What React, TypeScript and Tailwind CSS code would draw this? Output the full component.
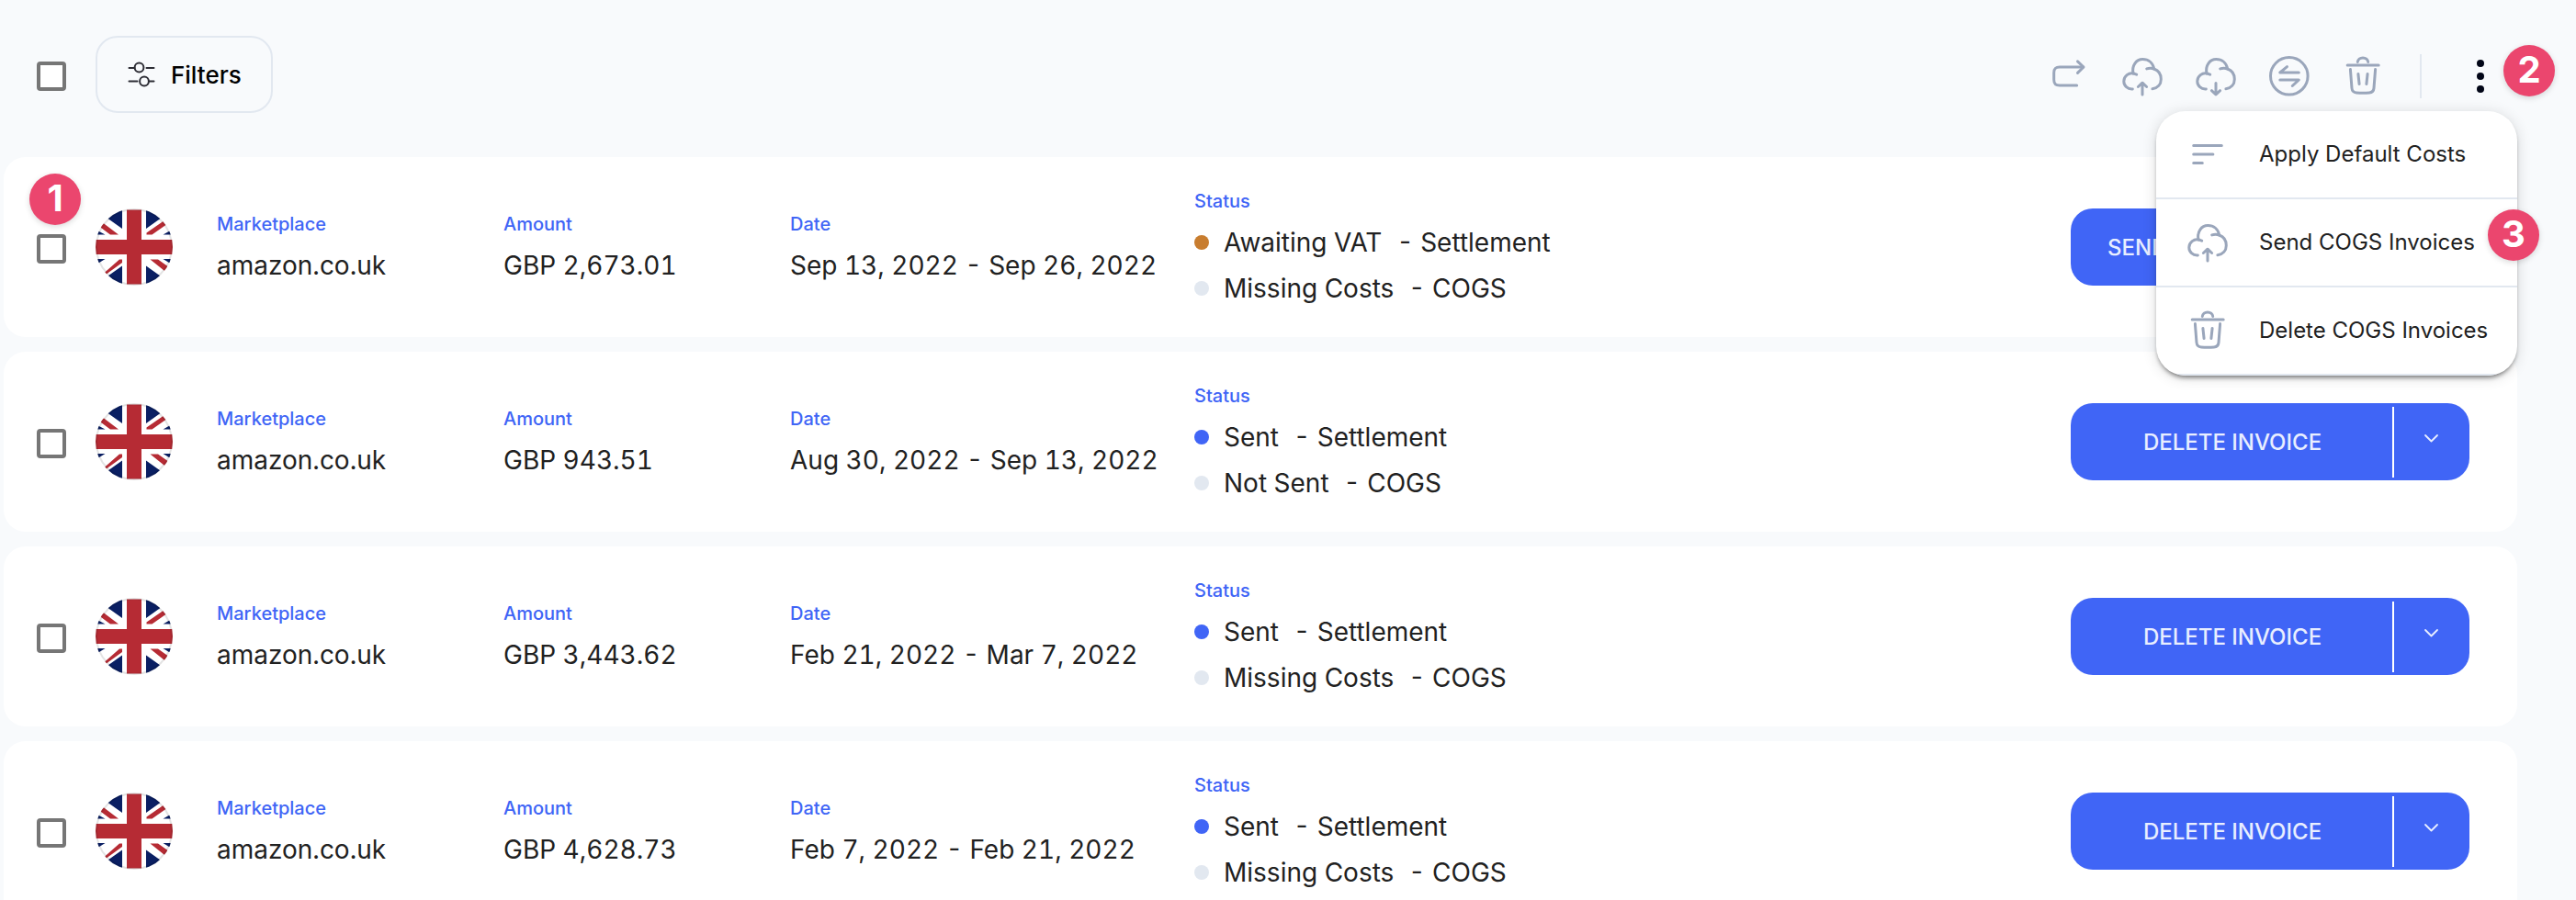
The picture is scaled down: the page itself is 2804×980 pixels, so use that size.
import { ReactNode } from "react";

type Status = {
  label: string;
  type: string;
  color: string;
};

type Invoice = {
  amount: string;
  date: string;
  statuses: Status[];
  action: string;
};

const invoices: Invoice[] = [
  {
    amount: "GBP 2,673.01",
    date: "Sep 13, 2022 - Sep 26, 2022",
    statuses: [
      { label: "Awaiting VAT", type: "Settlement", color: "bg-[#c87d2f]" },
      { label: "Missing Costs", type: "COGS", color: "bg-[#e2e8f0]" },
    ],
    action: "SEND",
  },
  {
    amount: "GBP 943.51",
    date: "Aug 30, 2022 - Sep 13, 2022",
    statuses: [
      { label: "Sent", type: "Settlement", color: "bg-[#4065f6]" },
      { label: "Not Sent", type: "COGS", color: "bg-[#e2e8f0]" },
    ],
    action: "DELETE INVOICE",
  },
  {
    amount: "GBP 3,443.62",
    date: "Feb 21, 2022 - Mar 7, 2022",
    statuses: [
      { label: "Sent", type: "Settlement", color: "bg-[#4065f6]" },
      { label: "Missing Costs", type: "COGS", color: "bg-[#e2e8f0]" },
    ],
    action: "DELETE INVOICE",
  },
  {
    amount: "GBP 4,628.73",
    date: "Feb 7, 2022 - Feb 21, 2022",
    statuses: [
      { label: "Sent", type: "Settlement", color: "bg-[#4065f6]" },
      { label: "Missing Costs", type: "COGS", color: "bg-[#e2e8f0]" },
    ],
    action: "DELETE INVOICE",
  },
];

function Icon({ children }: { children: ReactNode }) {
  return (
    <svg
      className="h-12 w-12 shrink-0 text-[#9aa6bb]"
      viewBox="0 0 48 48"
      fill="none"
      stroke="currentColor"
      strokeWidth="3"
      strokeLinecap="round"
      strokeLinejoin="round"
    >
      {children}
    </svg>
  );
}

function RedoIcon() {
  return (
    <Icon>
      <path d="M32.600 34H14c-4.600 0-6.300-1.900-6.300-6.300v-7.400c0-4.400 1.700-6.300 6.300-6.300h25.500" />
      <path d="M33.500 7.800l6.500 6.200-6.500 6.400" />
    </Icon>
  );
}

function Cloud() {
  return (
    <>
      <path d="M13.300 37.900C7.800 38.300 3.800 34.300 3.800 29.600c0-5.400 5.200-10.300 11.700-8.300l2.200.9" />
      <path d="M14 21C12.200 12.300 17.300 5.600 24.300 5.600c6.400 0 11.200 4 12.400 10.400 4.600 1.700 7.600 5.900 7.600 11.200 0 5.600-3.600 9.700-9.400 10.500" />
      <path d="M28.700 15.900c2.500-.8 5.300-.9 8 .1" />
    </>
  );
}

function UploadIcon() {
  return (
    <Icon>
      <Cloud />
      <path d="M24 44V32M19.400 35.500l4.600-4.300 4.600 4.300" />
    </Icon>
  );
}

function DownloadIcon() {
  return (
    <Icon>
      <Cloud />
      <path d="M24 31.500V43M19.400 39.700l4.600 4.300 4.600-4.300" />
    </Icon>
  );
}

function SwapIcon() {
  return (
    <Icon>
      <circle cx="23.800" cy="23.800" r="20.300" />
      <path d="M34.300 20H13.800l7.700-6.300" />
      <path d="M13.800 28h20.500l-7 6.500" />
    </Icon>
  );
}

function TrashIcon() {
  return (
    <Icon>
      <path d="M7.200 12h34" />
      <path d="M18.300 8.400c.3-2.600 2.600-4.500 5.700-4.500s5.400 1.900 5.700 4.500" />
      <path d="M10.400 16.600l1.600 20.400c.3 3.300 2 4.800 5 5 4.600.4 9.400.4 14 0 3-.2 4.700-1.700 5-5l1.600-20.400" />
      <path d="M18.900 21.500l1.200 11M29.100 21.500l-1.200 11" />
    </Icon>
  );
}

function LinesIcon() {
  return (
    <Icon>
      <path d="M8.700 14.400h30.600M8.700 23.900h21.200M8.700 33.400h9.600" />
    </Icon>
  );
}

function UkFlag() {
  return (
    <svg className="ml-8 h-[84px] w-[84px] shrink-0" viewBox="0 0 84 84">
      <defs>
        <clipPath id="flag">
          <circle cx="42" cy="42" r="42" />
        </clipPath>
      </defs>
      <g clipPath="url(#flag)">
        <rect width="84" height="84" fill="#fff" />
        <path fill="#0a1f63" d="M29 1.500v20.500L13.500 11 20 1.500zM55 1.500v20.500L70.500 11 64 1.500zM29 82.500V62.500L13.500 73.500 20 82.500zM55 82.500V62.500L70.500 73.500 64 82.500z" />
        <path fill="#0a1f63" d="M0 23L10.500 28.500H0zM84 22.500L73.500 28.500H84zM0 55h10.500L0 61.500zM84 55H73.500L84 61.500z" />
        <path fill="#b62b34" d="M8.500 16L25 28.500H16L4 19.500zM75 13L55.500 26.500v2h6L80 15.500zM9 70.500L26 55.500h3v3.500L9 73.500zM77 69.500L59.500 55.500H68L80 64z" />
        <path fill="#b62b34" d="M34 1.500h16v32.500h34v16H50v32.500H34V50H0V34h34z" />
      </g>
      <circle cx="42" cy="42" r="41" fill="none" stroke="#000" strokeOpacity="0.110" strokeWidth="2" />
    </svg>
  );
}

function Checkbox() {
  return <div className="h-8 w-8 shrink-0 rounded-[4px] border-4 border-[#767676] bg-white" />;
}

function Badge({ children, className }: { children: ReactNode; className: string }) {
  return (
    <div
      className={`absolute z-20 flex h-14 w-14 items-center justify-center rounded-full bg-[#eb466e] pb-0.5 text-[40px] font-bold leading-none text-white shadow-[0_2px_6px_rgba(0,0,0,0.15)] ${className}`}
    >
      {children}
    </div>
  );
}

function Field({ label, value, className }: { label: string; value: string; className: string }) {
  return (
    <div className={`-mt-0.5 shrink-0 ${className}`}>
      <p className="text-xl leading-7 font-medium text-[#4065f6]">{label}</p>
      <p className="mt-[13px] text-[28px] leading-9 whitespace-nowrap tabular-nums">{value}</p>
    </div>
  );
}

function InvoiceRow({ invoice }: { invoice: Invoice }) {
  return (
    <div className="flex h-[196px] shrink-0 items-center rounded-3xl bg-white pr-[52px] pl-9">
      <div className="pt-1">
        <Checkbox />
      </div>
      <UkFlag />
      <Field className="ml-12 w-[312px]" label="Marketplace" value="amazon.co.uk" />
      <Field className="w-[312px]" label="Amount" value={invoice.amount} />
      <Field className="w-[440px]" label="Date" value={invoice.date} />
      <div className="grow pt-1.5">
        <p className="text-xl leading-7 font-medium text-[#4065f6]">Status</p>
        <div className="mt-1.5">
          {invoice.statuses.map((status) => (
            <div key={status.type} className="flex h-[50px] items-center text-[28px] tabular-nums">
              <span className={`mr-4 h-4 w-4 rounded-full ${status.color}`} />
              <span>{status.label}</span>
              <span className="ml-4">- {status.type}</span>
            </div>
          ))}
        </div>
      </div>
      <div className="flex h-[84px] w-[434px] shrink-0 items-center rounded-3xl bg-[#4065f6] text-2xl font-medium text-[#e8eeff]">
        <span className={`grow pt-0.5 ${invoice.action === "SEND" ? "pl-10" : "pl-0.5 text-center"}`}>
          {invoice.action}
        </span>
        <span className="h-[77px] w-0.5 bg-white" />
        <span className="flex w-[82px] justify-center">
          <svg className="mb-2 h-4 w-6" viewBox="0 0 24 16" fill="none" stroke="currentColor" strokeWidth="1.800" strokeLinecap="round" strokeLinejoin="round">
            <path d="M5 5l6.500 6.500L18 5" />
          </svg>
        </span>
      </div>
    </div>
  );
}

function MenuItem({ icon, label }: { icon: ReactNode; label: string }) {
  return (
    <div className="flex h-24 items-center border-b-2 border-[#e2e8f0] pl-8 text-2xl">
      {icon}
      <span className="ml-8 whitespace-nowrap">{label}</span>
    </div>
  );
}

function ActionsMenu() {
  return (
    <div className="absolute top-[121px] left-[2347px] z-10 w-[393px] overflow-hidden rounded-[32px] bg-white shadow-[0_4px_5px_-2px_rgba(0,0,0,0.5),0_2px_16px_rgba(0,0,0,0.14)]">
      <MenuItem icon={<LinesIcon />} label="Apply Default Costs" />
      <MenuItem icon={<UploadIcon />} label="Send COGS Invoices" />
      <MenuItem icon={<TrashIcon />} label="Delete COGS Invoices" />
    </div>
  );
}

export default function App() {
  return (
    <div className="relative h-[980px] w-[2804px] overflow-hidden bg-[#f8fafc] font-[Inter,sans-serif] text-[#212121]">
      <header className="flex h-[171px] items-start pt-[39px] pl-10">
        <div className="pt-7">
          <Checkbox />
        </div>
        <button className="ml-8 flex h-[84px] w-[193px] items-center rounded-3xl border-2 border-[#e2e8f0] pl-[33px] text-[26px] font-medium text-black">
          <svg className="mr-[17px] h-[30px] w-[30px]" viewBox="0 0 30 30" fill="none" stroke="#2d2d35" strokeWidth="2" strokeLinecap="round">
            <path d="M1.500 8h6M20.500 8h8M1.500 22.500h9M23.500 22.500h5" />
            <circle cx="12.500" cy="7.500" r="4.900" />
            <circle cx="18" cy="22.500" r="4.900" />
          </svg>
          Filters
        </button>
        <div className="ml-auto flex items-center gap-8 pt-5 pr-[100px]">
          <RedoIcon />
          <UploadIcon />
          <DownloadIcon />
          <SwapIcon />
          <TrashIcon />
          <span className="ml-1.5 h-12 w-0.5 bg-[#e2e8f0]" />
          <span className="ml-7 flex w-2 flex-col gap-1.5">
            <span className="h-2 w-2 rounded-full bg-[#020617]" />
            <span className="h-2 w-2 rounded-full bg-[#020617]" />
            <span className="h-2 w-2 rounded-full bg-[#020617]" />
          </span>
        </div>
      </header>
      <main className="flex w-[2740px] flex-col gap-4 pl-1">
        {invoices.map((invoice) => (
          <InvoiceRow key={invoice.amount} invoice={invoice} />
        ))}
      </main>
      <ActionsMenu />
      {/* numbered steps */}
      <Badge className="top-[189px] left-8">1</Badge>
      <Badge className="top-[49px] left-[2725px]">2</Badge>
      <Badge className="top-[228px] left-[2708px]">3</Badge>
    </div>
  );
}
